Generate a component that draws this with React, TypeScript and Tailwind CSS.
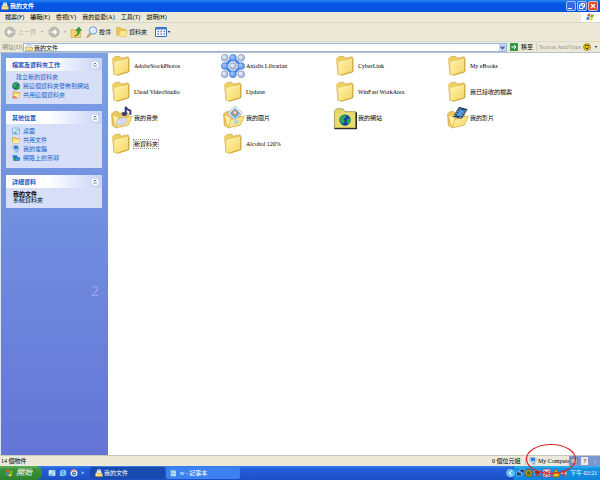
import type { ReactNode } from "react";

const menus = ["檔案(F)", "編輯(E)", "檢視(V)", "我的最愛(A)", "工具(T)", "說明(H)"];

type FolderKind = "folder" | "axialis" | "music" | "pictures" | "web" | "video";

const items: { name: string; kind: FolderKind; selected?: boolean }[] = [
  { name: "AdobeStockPhotos", kind: "folder" },
  { name: "Axialis Librarian", kind: "axialis" },
  { name: "CyberLink", kind: "folder" },
  { name: "My eBooks", kind: "folder" },
  { name: "Ulead VideoStudio", kind: "folder" },
  { name: "Updater", kind: "folder" },
  { name: "WinFast WorkArea", kind: "folder" },
  { name: "我已接收的檔案", kind: "folder" },
  { name: "我的音樂", kind: "music" },
  { name: "我的圖片", kind: "pictures" },
  { name: "我的網站", kind: "web" },
  { name: "我的影片", kind: "video" },
  { name: "新資料夾", kind: "folder", selected: true },
  { name: "Alcohol 120%", kind: "folder" },
];

function Globe({ className = "size-2" }: { className?: string }) {
  return (
    <svg viewBox="0 0 16 16" className={className} aria-hidden="true">
      <circle cx="8" cy="8" r="7" fill="#1d57b8" stroke="#0d5a42" />
      <path d="M2 5 8 1l4 3-4 3 1 3-4 2-3-4ZM11 7l4-1-1 5-4 2Z" fill="#36b247" />
      <path d="m5 12 5-4v3h5v3h-5v2Z" fill="#1c9030" />
    </svg>
  );
}

function SmallFolder({ className = "size-2" }: { className?: string }) {
  return (
    <svg viewBox="0 0 16 16" className={className} aria-hidden="true">
      <path d="M1 3h5l2 2h7v9H1Z" fill="#f6cf57" stroke="#c0912b" />
      <path d="M1 14 4 7h11v7Z" fill="#ffec9c" />
    </svg>
  );
}

function SharedFolder() {
  return (
    <svg viewBox="0 0 16 16" className="size-2" aria-hidden="true">
      <path d="M2 1h5l2 2h6v9H2Z" fill="#f6cf57" stroke="#c0912b" />
      <path d="M3 12 5 6h10v6Z" fill="#ffec9c" />
      <path d="M1 10h5l4 2v3H1Z" fill="#d98b5a" />
    </svg>
  );
}

function MonitorIcon({ className = "size-2" }: { className?: string }) {
  return (
    <svg viewBox="0 0 16 16" className={className} aria-hidden="true">
      <path d="M2 1h10l2 2v7H4L2 8Z" fill="#d9e7f6" stroke="#6a8fc2" />
      <path d="M4 2h8v6H4Z" fill="#2682dc" />
      <path d="M7 10h4v3h2v2H5v-2h2Z" fill="#86b3e6" />
    </svg>
  );
}

function DocsIcon({ className = "size-2" }: { className?: string }) {
  return (
    <svg viewBox="0 0 16 16" className={className} aria-hidden="true">
      <path d="M3 7 5 1h6l2 6v6H3Z" fill="#fff" stroke="#8397b7" />
      <path d="M1 8h4l1 1h9v6H1Z" fill="#fbe28a" stroke="#aa8a3d" />
      <path d="M6 3h4M6 6h5" stroke="#5d8ccf" />
    </svg>
  );
}

function DesktopIcon({ className = "size-2" }: { className?: string }) {
  return (
    <svg viewBox="0 0 16 16" className={className} aria-hidden="true">
      <rect x="1" y="2" width="14" height="12" rx="2" fill="#d7ebff" stroke="#3d82cb" />
      <path d="m5 11 6-7 2 2-6 6Z" fill="#fff" stroke="#2a6fb8" />
      <path d="M3 12h6" stroke="#2f9edc" strokeWidth="2" />
    </svg>
  );
}

function NetworkIcon({ className = "size-2" }: { className?: string }) {
  return (
    <svg viewBox="0 0 16 16" className={className} aria-hidden="true">
      <rect x="1" y="2" width="10" height="7" fill="#2d7fd7" stroke="#b9d2ed" />
      <rect x="6" y="7" width="9" height="6" fill="#239bdf" stroke="#174a91" />
      <circle cx="5" cy="11" r="3" fill="#2c9f51" />
    </svg>
  );
}

function WindowsFlag({ className = "size-2" }: { className?: string }) {
  return (
    <svg viewBox="0 0 20 18" className={className} aria-hidden="true">
      <path d="M4 2q3-2 6 0L8 8q-3-2-6 0Z" fill="#ef5a2b" />
      <path d="M11 3q3 2 7 0l-2 6q-3 2-7 0Z" fill="#73b92d" />
      <path d="M2 9q3-2 6 0l-2 7q-3-2-6 0Z" fill="#3d87e6" />
      <path d="M9 10q3 2 7 0l-2 6q-3 2-7 0Z" fill="#fbc52c" />
    </svg>
  );
}

function ClosedFolder() {
  return (
    <>
      <path d="M5 8 8 5l7-1 2 3 10-2 1 2v19L12 31l-5-2Z" fill="#f0cf63" stroke="#d2a93f" />
      <path d="M5 8 7 29l5 2V13Z" fill="#f7de83" />
      <path d="M7 30V12l5-2 16-3v19L11 31Z" fill="url(#folderFace)" stroke="#d4ae45" strokeWidth=".8" />
      <path d="M28 8v18L12 31" fill="none" stroke="#c39a34" />
    </>
  );
}

function OpenFolder() {
  return (
    <>
      <path d="M2 12 5 9l6-1 2 3 12-2 2 3v15L8 32l-5-3Z" fill="#edc95a" stroke="#c99d37" />
      <path d="m8 33 5-13 20-5-6 14Z" fill="url(#folderFace)" stroke="#d0a640" />
      <path d="m3 14 5 19 5-13-4-5Z" fill="#fff0a7" stroke="#d8b759" />
    </>
  );
}

function ItemIcon({ kind }: { kind: FolderKind }) {
  if (kind === "axialis") {
    const dots = [5, 16, 27].flatMap((y) => [5, 16, 27].map((x) => [x, y]));
    return (
      <svg viewBox="0 0 32 32" className="size-6 shrink-0" aria-hidden="true">
        <path d="m16 5 11 11-11 11L5 16Z" stroke="#4f88e4" strokeWidth="4" fill="#fff" />
        {dots.map(([x, y]) => (
          <g key={`${x}-${y}`}>
            <circle
              cx={x}
              cy={y}
              r="4.5"
              fill={(x + y) % 2 ? "#6b9eee" : "#b4c3de"}
              stroke={(x + y) % 2 ? "#4b83dd" : "#8296bf"}
            />
            <circle cx={x - 1} cy={y - 1} r="2.4" fill={(x + y) % 2 ? "#9cc0f5" : "#e2e9f5"} />
          </g>
        ))}
      </svg>
    );
  }
  if (kind === "web") {
    return (
      <svg viewBox="0 0 34 32" className="size-6 shrink-0" aria-hidden="true">
        <path d="M2 7 5 3h9l3 4h15v23H2Z" fill="#e4da68" stroke="#8c8846" />
        <path d="M3 9h28v20H3Z" fill="#e8de6c" />
        <path d="M33 8v23H2" fill="none" stroke="#2c2c22" strokeWidth="2" />
        <circle cx="17" cy="19" r="8" fill="#173fa5" />
        <path d="m11 14 6-3 2 3-4 3 2 4-4 4-4-6Zm10 3 4-1v5l-4 4-2-4Z" fill="#27a95a" />
      </svg>
    );
  }
  if (kind === "folder") {
    return (
      <svg viewBox="0 1 34 34" className="size-6 shrink-0" aria-hidden="true">
        <ClosedFolder />
      </svg>
    );
  }
  return (
    <svg viewBox="-2 0 36 36" className="size-6 shrink-0" aria-hidden="true">
      <OpenFolder />
      {kind === "music" && (
        <g>
          <ellipse cx="17" cy="23" rx="8" ry="5" transform="rotate(-20 17 23)" fill="#dce1ee" stroke="#a7b1d1" />
          <circle cx="17" cy="23" r="2" fill="#fff" stroke="#a9acc9" />
          <ellipse cx="21" cy="12" rx="4" ry="3" fill="#363c78" />
          <path d="M23 12V1q1 4 7 6v6" fill="none" stroke="#363c78" strokeWidth="3" />
        </g>
      )}
      {kind === "pictures" && (
        <g>
          <path d="m19 0 11 10-11 11L8 11Z" fill="#f4faff" stroke="#78a9d5" />
          <path d="m19 3 8 8-8 8-8-8Z" fill="#62aee2" />
          <circle cx="19" cy="10" r="4" fill="#e57759" />
          <circle cx="19" cy="10" r="2" fill="#fff" />
          <path d="m16 23 9-2-4 7Z" fill="#9bd2ef" />
        </g>
      )}
      {kind === "video" && (
        <g>
          <path d="m10 16 9-15 13 4-9 14Z" fill="#223d66" />
          <path d="m15 14 6-9 6 2-6 9Z" fill="#4a9ee3" />
          <path d="m12 15 9-12m0 15 8-12" stroke="#e8f1fc" strokeWidth="1.5" strokeDasharray="2 2" />
        </g>
      )}
    </svg>
  );
}

function TaskPanel({ title, children }: { title: string; children: ReactNode }) {
  return (
    <section className="bg-[#d6dff7]">
      <h2 className="flex h-[13px] items-center justify-between bg-linear-to-r from-white from-45% to-[#c6d3f7] pr-0.5 pl-1.5 text-[6px] font-bold text-[#215dc6]">
        {title}
        <button type="button" aria-label={`收合${title}`} className="size-2.5">
          <svg viewBox="0 0 20 20" className="size-2.5">
            <circle cx="10" cy="10" r="8" fill="#fff" stroke="#a9b9e3" />
            <path d="m7 9 3-3 3 3m-6 5 3-3 3 3" fill="none" stroke="#34529a" strokeWidth="1.6" />
          </svg>
        </button>
      </h2>
      <div className="pl-1.5">{children}</div>
    </section>
  );
}

function TaskLink({ icon, children }: { icon?: ReactNode; children: ReactNode }) {
  return (
    <li>
      <a href="#" className="flex h-[9px] items-center gap-[3px] whitespace-nowrap text-[#215dc6]">
        {icon}
        {children}
      </a>
    </li>
  );
}

function Divider() {
  return <span className="h-3.5 w-px bg-[#d3cfbd]" />;
}

function RoundArrow({ flip }: { flip?: boolean }) {
  return (
    <svg viewBox="0 0 24 24" className="size-3" aria-hidden="true">
      <circle cx="12" cy="12" r="10.5" fill="#c9c9c3" stroke="#a3a39c" />
      <circle cx="12" cy="12" r="8.5" fill="#b5b5ae" />
      <path
        d={flip ? "M6 12h11m-5-5 5 5-5 5" : "M18 12H7m5-5-5 5 5 5"}
        fill="none"
        stroke="#fff"
        strokeWidth="2.6"
      />
    </svg>
  );
}

function Toolbar() {
  return (
    <div className="flex h-[19px] items-center border-b border-[#dedac9] pl-1 text-[6px]">
      <button type="button" className="flex items-center gap-0.5 text-[#b9b6a8]">
        <RoundArrow />
        <span className="w-5 text-left">上一頁</span>
      </button>
      <span className="w-2 text-center text-[4px] text-[#aaa798]">▾</span>
      <button type="button" aria-label="下一頁" className="ml-0.5">
        <RoundArrow flip />
      </button>
      <span className="ml-1 text-[4px] text-[#aaa798]">▾</span>
      <button type="button" aria-label="上移" className="ml-1">
        <svg viewBox="0 0 24 24" className="size-3">
          <path d="M2 7h8l2 3h9v13H2Z" fill="#f4d46a" stroke="#c69d37" />
          <path d="M9 20q8-2 6-11h-4l7-7 5 7h-4q1 10-10 11Z" fill="#33a437" stroke="#167b22" />
        </svg>
      </button>
      <span className="ml-0.5"><Divider /></span>
      <button type="button" className="ml-0.5 flex items-center gap-px">
        <svg viewBox="0 0 24 24" className="size-3">
          <path d="m10 14-8 9" stroke="#c59b6a" strokeWidth="4" />
          <circle cx="14" cy="9" r="7.5" fill="#d5edff" stroke="#6c9bd4" strokeWidth="2" />
          <path d="M10 8q1-4 5-4" fill="none" stroke="#fff" strokeWidth="2" />
        </svg>
        搜尋
      </button>
      <button type="button" className="ml-[5px] flex items-center gap-px">
        <svg viewBox="0 0 24 24" className="size-3">
          <path d="M1 3h8l2 3h8v12H1Z" fill="#efc655" stroke="#c89a36" />
          <path d="m5 20 4-11h14l-4 13Z" fill="#ffe995" stroke="#d3aa42" />
        </svg>
        資料夾
      </button>
      <span className="ml-[5px]"><Divider /></span>
      <button type="button" aria-label="檢視方式" className="ml-[3px] flex items-center gap-px">
        <svg viewBox="0 0 24 20" className="h-[10px] w-3">
          <rect x="1" y="1" width="22" height="18" rx="1" fill="#fff" stroke="#336db8" strokeWidth="2" />
          <path d="M1 3h22" stroke="#3b7acb" strokeWidth="4" />
          <path d="M5 9h3m3 0h3m3 0h3M5 14h3m3 0h3m3 0h3" stroke="#4a78bd" strokeWidth="3" />
        </svg>
        <span className="text-[4px]">▾</span>
      </button>
    </div>
  );
}

function AddressBar() {
  return (
    <form className="flex h-[11px] items-center border-b border-[#b9bfcb] pl-0.5 text-[6px]">
      <label htmlFor="address" className="w-[21px] whitespace-nowrap text-[#8c897c]">
        網址(D)
      </label>
      <div className="flex h-[9px] flex-1 items-center border border-[#9fb6d6] bg-white">
        <DocsIcon className="ml-px size-2" />
        <input
          id="address"
          defaultValue="我的文件"
          className="h-full min-w-0 flex-1 bg-transparent pl-px outline-none"
        />
        <button type="button" aria-label="展開網址" className="flex h-full w-[7px] items-center justify-center bg-[#c3d3fb]">
          <svg viewBox="0 0 8 8" className="size-[5px]">
            <path d="m1 2 3 4 3-4" fill="none" stroke="#33538f" strokeWidth="2" />
          </svg>
        </button>
      </div>
      <button type="submit" className="ml-[3px] flex items-center gap-[3px]">
        <svg viewBox="0 0 16 16" className="size-2">
          <rect width="16" height="16" rx="1" fill="#2d9c42" />
          <path d="M3 8h9M8 4l4 4-4 4" fill="none" stroke="#fff" strokeWidth="2" />
        </svg>
        移至
      </button>
      <span className="mr-px ml-[3px] h-2 w-px bg-[#d3cfbd]" />
      <button type="button" className="flex w-[62px] items-center gap-0.5 whitespace-nowrap pl-px text-[6px] text-[#96938a]">
        Norton AntiVirus
        <svg viewBox="0 0 16 16" className="size-2 shrink-0">
          <circle cx="8" cy="8" r="7" fill="#e9bc13" stroke="#68551b" />
          <path d="M4 5h3M9 5h3M5 9l3 3 3-3" fill="none" stroke="#292414" strokeWidth="2" />
        </svg>
        <span className="ml-0.5 text-[4px] text-black">▾</span>
      </button>
    </form>
  );
}

function TitleBar() {
  return (
    <header className="flex h-3 items-center bg-linear-to-b from-[#2b83f5] via-[#0456e4] via-30% to-[#0553dd] pr-0.5 pl-px text-white">
      <DocsIcon />
      <h1 className="ml-px flex-1 text-[6px] font-bold">我的文件</h1>
      <div className="flex gap-px">
        <button type="button" aria-label="最小化" className="flex size-[10px] items-end rounded-[2px] border border-[#a7c2fa] bg-[#3568e7] p-px">
          <span className="h-px w-1 bg-white" />
        </button>
        <button type="button" aria-label="還原" className="size-[10px] rounded-[2px] border border-[#a7c2fa] bg-[#3568e7]">
          <svg viewBox="0 0 16 16" className="size-2">
            <path d="M6 6V3h7v7h-3M3 6h7v7H3Z" fill="none" stroke="#fff" strokeWidth="2" />
          </svg>
        </button>
        <button type="button" aria-label="關閉" className="size-[10px] rounded-[2px] border border-[#f3b8a6] bg-[#df492c]">
          <svg viewBox="0 0 16 16" className="size-2">
            <path d="m4 4 8 8m0-8-8 8" stroke="#fff" strokeWidth="2.5" />
          </svg>
        </button>
      </div>
    </header>
  );
}

function Sidebar() {
  return (
    <aside className="flex w-[108px] shrink-0 flex-col gap-[7px] border-l border-[#dfe5f4] bg-linear-to-b from-[#7ba0e6] to-[#6475d6] pt-[5px] pr-1.5 pl-[5px] text-[6px]">
      <TaskPanel title="檔案及資料夾工作">
        <ul className="pt-px pb-[5px]">
          <li>
            <a href="#" className="flex h-[9px] items-center pl-1 whitespace-nowrap text-[#215dc6]">建立新的資料夾</a>
          </li>
          <TaskLink icon={<Globe />}>將這個資料夾發佈到網站</TaskLink>
          <TaskLink icon={<SharedFolder />}>共用這個資料夾</TaskLink>
        </ul>
      </TaskPanel>
      <TaskPanel title="其他位置">
        <ul className="pt-0.5 pb-1.5">
          <TaskLink icon={<DesktopIcon />}>桌面</TaskLink>
          <TaskLink icon={<SmallFolder />}>共用文件</TaskLink>
          <TaskLink icon={<MonitorIcon />}>我的電腦</TaskLink>
          <TaskLink icon={<NetworkIcon />}>網路上的芳鄰</TaskLink>
        </ul>
      </TaskPanel>
      <TaskPanel title="詳細資料">
        <div className="pt-[3px] pb-[5px] pl-px leading-[6px]">
          <p className="font-bold">我的文件</p>
          <p>系統資料夾</p>
        </div>
      </TaskPanel>
      <p className="mt-[72px] pr-[3px] text-right font-['Open_Sans',sans-serif] text-[14px] text-[#98aae9]">2</p>
    </aside>
  );
}

function FileGrid() {
  return (
    <main className="flex-1 bg-white pl-px">
      <ul className="grid grid-cols-[repeat(auto-fill,112px)]">
        {items.map((item) => (
          <li key={item.name} className="flex h-[26px] items-center">
            <a href="#" className="flex items-center gap-px whitespace-nowrap">
              <ItemIcon kind={item.kind} />
              <span className={item.selected ? "outline-1 outline-dotted outline-[#999]" : ""}>{item.name}</span>
            </a>
          </li>
        ))}
      </ul>
    </main>
  );
}

function StatusBar() {
  return (
    <footer className="relative flex h-[11px] items-center border-t border-[#c9c6ba] bg-[#ece9d8] pl-px text-[6px]">
      <span className="flex-1">14 個物件</span>
      <span className="w-[33px] whitespace-nowrap">0 個位元組</span>
      <span className="mr-[3px] h-2 w-px bg-[#cdc9b8]" />
      <span className="flex w-10 items-center gap-px whitespace-nowrap text-[6px]">
        <MonitorIcon className="size-2 shrink-0" />
        My Computer
      </span>
      <div className="flex h-[10px] w-[31px] items-center gap-[3px] bg-[#7b97d0] pl-px">
        <svg viewBox="0 0 16 12" className="h-1.5 w-2" aria-hidden="true">
          <rect x="1" y="1" width="14" height="10" fill="#b5a6a8" stroke="#5c6484" />
          <path d="M3 4h10M3 8h10" stroke="#fff" strokeDasharray="2 1" />
        </svg>
        <button type="button" aria-label="說明" className="flex h-2 w-[7px] items-center justify-center bg-[#eeeada] text-[6px]">?</button>
        <span className="ml-auto pr-1 text-[6px] leading-none text-white">:</span>
      </div>
      <svg viewBox="0 0 52 32" className="absolute -top-[13px] right-[23px] z-20 h-8 w-[52px]" aria-hidden="true">
        <ellipse cx="26" cy="16" rx="24.5" ry="14.5" fill="none" stroke="#d9242b" strokeWidth="1.2" />
      </svg>
    </footer>
  );
}

function Taskbar() {
  return (
    <nav aria-label="工作列" className="flex h-3.5 items-center bg-linear-to-b from-[#3a80ed] via-[#245edb] via-20% to-[#1c4fc4] text-[6px] text-white">
      <button type="button" className="flex h-full w-[42px] items-center gap-0.5 rounded-r-md bg-linear-to-b from-[#60b25c] via-[#399138] via-25% to-[#2f8330] pl-[5px] text-[8px] italic">
        <WindowsFlag className="h-2 w-[9px]" />
        開始
      </button>
      <div className="flex flex-1 items-center">
        <div className="flex w-12 items-center gap-[3px] pl-1.5">
          <button type="button" aria-label="顯示桌面"><DesktopIcon /></button>
          <button type="button" aria-label="Internet Explorer">
            <svg viewBox="0 0 16 16" className="size-2">
              <circle cx="8" cy="8" r="5" fill="none" stroke="#76c7ff" strokeWidth="3" />
              <path d="M4 8h9" stroke="#a8dcff" strokeWidth="2" />
              <path d="M1 13Q5 14 14 2" fill="none" stroke="#d8edff" />
            </svg>
          </button>
          <button type="button" aria-label="媒體播放程式">
            <svg viewBox="0 0 16 16" className="size-2">
              <circle cx="8" cy="8" r="7" fill="#e9f2fa" />
              <path d="M2 6a6 6 0 0 1 11-1" fill="none" stroke="#ed7930" strokeWidth="2" />
              <circle cx="8" cy="9" r="4" fill="#275aa6" />
              <path d="m7 7 4 2-4 2Z" fill="#fff" />
            </svg>
          </button>
          <span className="self-start text-[6px] leading-none">»</span>
        </div>
        <button type="button" className="flex h-3 w-[75px] items-center gap-px rounded-[2px] bg-[#194bae] pl-[5px]">
          <DocsIcon />
          我的文件
        </button>
        <button type="button" className="ml-px flex h-3 w-[74px] items-center gap-[3px] rounded-[2px] bg-[#3c81f2] pl-[3px]">
          <svg viewBox="0 0 16 16" className="size-2" aria-hidden="true">
            <path d="M3 2h9l2 2v11H3Z" fill="#bcecff" stroke="#4887b3" />
            <path d="M5 6h6M5 9h6M5 12h4M4 1v2m3-2v2m3-2v2" stroke="#3b87ac" />
          </svg>
          w - 記事本
        </button>
      </div>
      <div className="flex h-full w-[87px] items-center border-l border-[#1b65c9] bg-linear-to-b from-[#30b5f4] via-[#1391e7] via-20% to-[#1184db]">
        <svg viewBox="0 0 112 18" className="-ml-2 h-[10px] w-[62px] shrink-0" aria-hidden="true">
          <circle cx="8" cy="9" r="7" fill="#55b9f3" stroke="#acdfff" />
          <path d="m10 5-4 4 4 4" fill="none" stroke="#fff" strokeWidth="2" />
          <path d="M19 7h9v7h-9Zm6-5h8v7h-8Z" fill="#183b80" stroke="#b8d8ff" />
          <circle cx="41" cy="9" r="7" fill="#a29328" stroke="#44410b" />
          <circle cx="41" cy="9" r="3" fill="#57641a" />
          <path d="M52 4h9v8h-9Z" fill="#253665" stroke="#d3d9ee" />
          <path d="m53 6 9 9m0-9-9 9" stroke="#d52327" strokeWidth="2" />
          <path d="M67 2h13v14H67Z" fill="#ded5df" stroke="#bc3c46" />
          <path d="m69 5 9 9m0-9-9 9" stroke="#c62e35" strokeWidth="2" />
          <path d="M85 8h11v8H85Zm2 0q3-10 7 0" fill="#f1c429" stroke="#a26a16" strokeWidth="2" />
          <path d="M100 7h4l5-4v12l-5-4h-4Z" fill="#d9dbe3" />
          <path d="m100 4 9 11m0-11-9 11" stroke="#d72d26" strokeWidth="2" />
        </svg>
        <time className="pl-0.5 whitespace-nowrap">下午 02:21</time>
      </div>
    </nav>
  );
}

export default function App() {
  return (
    <div className="flex min-h-screen flex-col bg-[#ece9d8] font-['Liberation_Serif','Noto_Sans_CJK_TC',serif] text-[6px] leading-[8px] text-black">
      <svg className="absolute size-0" aria-hidden="true">
        <defs>
          <linearGradient id="folderFace" x1="0" y1="0" x2="1" y2="1">
            <stop offset="0" stopColor="#fff5b4" />
            <stop offset="1" stopColor="#f5d561" />
          </linearGradient>
        </defs>
      </svg>
      <TitleBar />
      <div className="flex h-[11px] items-center border-b border-[#dad6c6]">
        <nav aria-label="功能表" className="flex flex-1 gap-1.5 pl-[5px]">
          {menus.map((menu) => (
            <button key={menu} type="button" className="whitespace-nowrap">{menu}</button>
          ))}
        </nav>
        <div className="flex h-full w-[19px] items-center justify-center bg-white">
          <WindowsFlag className="h-2 w-[9px]" />
        </div>
      </div>
      <Toolbar />
      <AddressBar />
      <div className="flex flex-1">
        <Sidebar />
        <FileGrid />
      </div>
      <StatusBar />
      <Taskbar />
    </div>
  );
}
